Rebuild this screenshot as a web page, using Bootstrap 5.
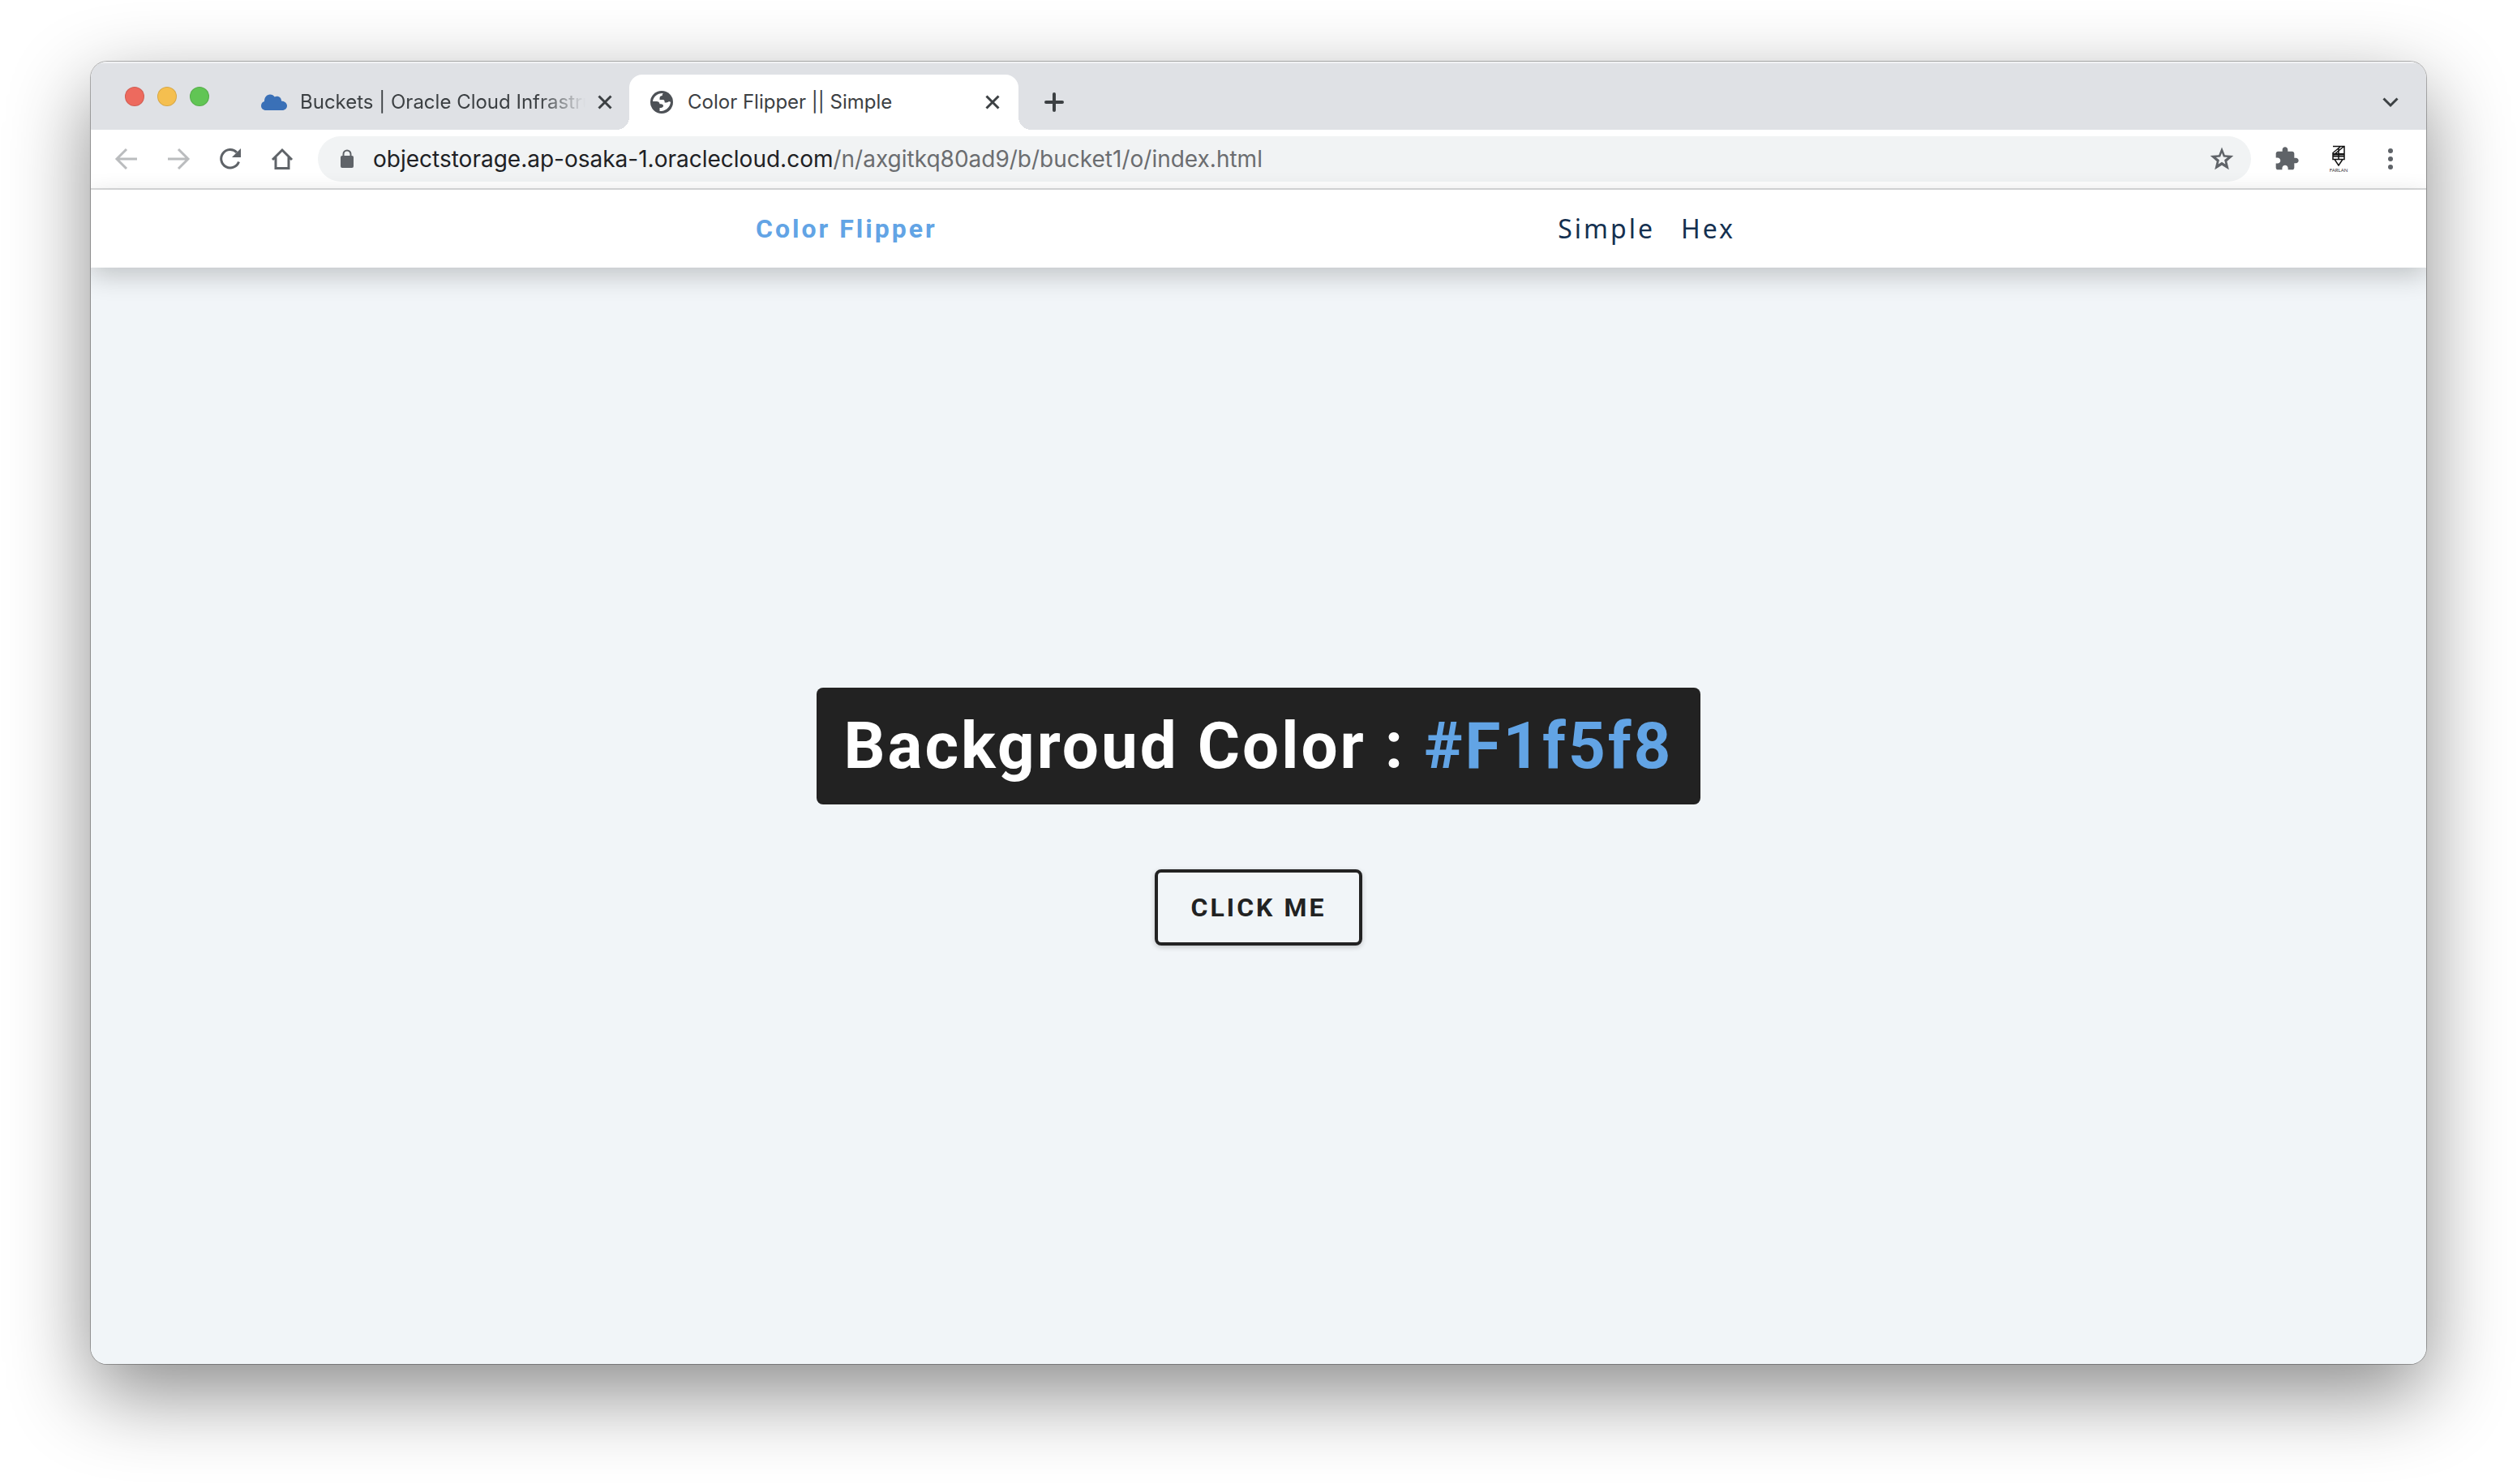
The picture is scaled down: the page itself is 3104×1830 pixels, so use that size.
<!DOCTYPE html>
<html lang="en">
<head>
<meta charset="utf-8">
<meta name="viewport" content="width=device-width, initial-scale=1">
<title>Color Flipper || Simple</title>
<link rel="stylesheet" href="https://cdn.jsdelivr.net/npm/bootstrap@5.3.0/dist/css/bootstrap.min.css">
<style>
  :root { --grey-ink: #5f6368; --tab-ink: #3c4043; --strip: #dfe1e5; --sky: #62a4e5; --coal: #222222; --page: #f1f5f8; }
  body { font-family: Inter, "Liberation Sans", sans-serif; background: #fff; }
  .desktop { padding: 76px 112px 148px; min-height: 100vh; }
  .browser { border-radius: 20px; background: #fff; box-shadow: 0 0 0 1px rgba(0,0,0,.28), 0 36px 100px rgba(0,0,0,.46); }
  .browser-clip { border-radius: 20px; overflow: hidden; }
  .icon-btn { border: 0; background: none; padding: 0; width: 32px; height: 32px; display: flex; align-items: center; justify-content: center; color: var(--grey-ink); }
  svg { display: block; flex: none; }

  .tab-strip { height: 84px; background: var(--strip); box-shadow: inset 0 2px 1px rgba(255,255,255,.6); color: var(--tab-ink); padding: 16px 28px 0 42px; }
  .lights { gap: 16px; padding-top: 15px; width: 154px; }
  .light { width: 24px; height: 24px; border-radius: 50%; border: 1px solid rgba(0,0,0,.12); padding: 0; }
  .light-red { background: #ed6a5e; } .light-amber { background: #f5bf4f; } .light-green { background: #61c554; }
  .tab-item { height: 68px; }
  .tab-item a { font-size: 24px; line-height: 32px; color: var(--tab-ink); white-space: nowrap; }
  .tab-idle { width: 468px; padding: 0 14px; gap: 16px; }
  .tab-idle a { overflow: hidden; flex: 1; margin-right: -8px; -webkit-mask-image: linear-gradient(to right, #000 84%, transparent); mask-image: linear-gradient(to right, #000 84%, transparent); }
  .tab-live { width: 480px; background: #fff; border-radius: 16px 16px 0 0; padding: 0 16px 0 24px; gap: 16px; position: relative; }
  .tab-live::before, .tab-live::after { content: ""; position: absolute; bottom: 0; width: 16px; height: 16px; }
  .tab-live::before { right: 100%; background: radial-gradient(circle at 0 0, transparent 16px, #fff 16px); }
  .tab-live::after { left: 100%; background: radial-gradient(circle at 100% 0, transparent 16px, #fff 16px); }
  .tab-live a { flex: 1; }
  .tab-add { margin-left: 28px; }

  .tool-row { height: 74px; border-bottom: 2px solid #dadbdc; padding: 0 28px; gap: 32px; }
  .omnibox { height: 56px; border-radius: 28px; background: #f1f3f4; padding: 0 20px; gap: 16px; margin: 0 -4px; }
  .address { font-size: 28px; line-height: 40px; color: #6b6d70; white-space: nowrap; flex: 1; }
  .address b { font-weight: 400; color: #202124; }
  .profile { flex-direction: column; gap: 2px; }
  .profile span { font: 400 6px/6px Lato, sans-serif; color: #333; }

  .site { background: var(--page); height: calc(100vh - 382px); }
  .site-nav { height: 96px; background: #fff; box-shadow: 0 10px 30px rgba(0,0,0,.2); position: relative; }
  .nav-center { width: 100%; max-width: 1240px; }
  .brand { font: 700 32px/40px Roboto, sans-serif; letter-spacing: 3px; color: var(--sky); }
  .menu { gap: 32px; padding-right: 32px; }
  .menu a { font: 400 32px/48px "Noto Sans", sans-serif; letter-spacing: 3px; color: #143050; }
  .stage { gap: 80px; padding-top: 2px; }
  .headline { font: 700 80px/80px Roboto, sans-serif; letter-spacing: 3px; background: var(--coal); color: #fff; padding: 32px 34px; border-radius: 8px; margin: 0; }
  .headline span { color: var(--sky); }
  .flip-btn { font: 700 32px/38px Roboto, sans-serif; letter-spacing: 3px; color: var(--coal); background: transparent; border: 4px solid var(--coal); border-radius: 8px; padding: 24px 40px; min-width: 256px; box-shadow: 0 2px 6px rgba(0,0,0,.2); }
</style>
<script src="https://cdn.jsdelivr.net/npm/bootstrap@5.3.0/dist/js/bootstrap.bundle.min.js"></script>
</head>
<body>
<div class="desktop">
  <div class="browser">
    <div class="browser-clip">
      <header class="tab-strip d-flex">
        <div class="lights d-flex align-items-start">
          <button class="light light-red" aria-label="Close window"></button>
          <button class="light light-amber" aria-label="Minimise window"></button>
          <button class="light light-green" aria-label="Zoom window"></button>
        </div>
        <div class="tab-item tab-idle d-flex align-items-center">
          <svg width="32" height="32" viewBox="0 0 32 32" aria-hidden="true"><path fill="#3a70b7" d="M6 26C2.500 26 0 23.500 0 20.500 0 17.500 1.800 15.500 4 15 4 10 7 6.500 11 6.500c2.500 0 4.500 1.200 5.700 3 1-.7 2.300-1 3.500-.8 3 .4 5 3 4.800 5.800 4 .2 7 2.800 7 6 0 3-2.500 5.500-6 5.500z"/></svg>
          <a class="text-decoration-none" href="#">Buckets | Oracle Cloud Infrastructure</a>
          <button class="icon-btn" aria-label="Close tab"><svg width="20" height="20" viewBox="0 0 20 20" fill="none" stroke="#3c4043" stroke-width="3"><path d="M2.500 2.500l15 15M17.500 2.500l-15 15"/></svg></button>
        </div>
        <div class="tab-item tab-live d-flex align-items-center">
          <svg width="32" height="32" viewBox="0 0 32 32" aria-hidden="true"><circle cx="16" cy="16" r="14" fill="#4d5156"/><path fill="#fff" d="M18 5c-1 .6-1.500 1.500-1.200 3-2 0-3.300 1-3.300 3.200v1.800h4c2 0 2.200 1.600 2.200 3.500 2 .2 3.600-.2 4.500-.9 1-.6 2.300-.6 2.800.4-.5 5-4.500 10-11 11h-2.500v-4c2.500 0 4.500-.6 4.500-2.500 0-2-1.800-2.300-4.500-2.300-.2-2.200-1.500-3.200-4-3.200H5C5.500 9.500 11 4.500 18 5z"/></svg>
          <a class="text-decoration-none" href="#">Color Flipper || Simple</a>
          <button class="icon-btn" aria-label="Close tab"><svg width="20" height="20" viewBox="0 0 20 20" fill="none" stroke="#3c4043" stroke-width="3"><path d="M2.500 2.500l15 15M17.500 2.500l-15 15"/></svg></button>
        </div>
        <div class="tab-item tab-add d-flex align-items-center">
          <button class="icon-btn" aria-label="New tab"><svg width="24" height="24" viewBox="0 0 24 24" fill="none" stroke="#3c4043" stroke-width="4" stroke-linecap="round"><path d="M12 2v20M2 12h20"/></svg></button>
        </div>
        <div class="tab-item d-flex align-items-center ms-auto">
          <button class="icon-btn" aria-label="Search tabs"><svg width="20" height="14" viewBox="0 0 20 14" fill="none" stroke="#3c4043" stroke-width="3"><path d="M1.500 2.500L10 11l8.500-8.500"/></svg></button>
        </div>
      </header>

      <div class="tool-row d-flex align-items-center">
        <button class="icon-btn" aria-label="Back"><svg width="32" height="32" viewBox="0 0 32 32" fill="none" stroke="#babcbe" stroke-width="3"><path d="M29 16H4M16 4L4 16l12 12"/></svg></button>
        <button class="icon-btn" aria-label="Forward"><svg width="32" height="32" viewBox="0 0 32 32" fill="none" stroke="#babcbe" stroke-width="3"><path d="M3 16h25M16 4l12 12-12 12"/></svg></button>
        <button class="icon-btn" aria-label="Reload"><svg width="32" height="32" viewBox="0 0 32 32"><path fill="none" stroke="#5f6368" stroke-width="3" d="M26.500 19.500A11.200 11.200 0 1 1 24 8"/><path fill="#5f6368" d="M29 3v11H18z"/></svg></button>
        <button class="icon-btn" aria-label="Home"><svg width="32" height="32" viewBox="0 0 32 32" fill="none" stroke="#5f6368" stroke-width="3"><path d="M4 17L16 5l12 12M8 14v13.500h16V14"/></svg></button>
        <div class="omnibox d-flex align-items-center flex-fill">
          <svg width="32" height="32" viewBox="0 0 32 32" aria-hidden="true"><rect x="8" y="12" width="16" height="15" rx="2" fill="#5f6368"/><path d="M11.500 13v-3a4.500 4.500 0 0 1 9 0v3" fill="none" stroke="#5f6368" stroke-width="2"/></svg>
          <div class="address"><b>objectstorage.ap-osaka-1.oraclecloud.com</b>/n/axgitkq80ad9/b/bucket1/o/index.html</div>
          <button class="icon-btn" aria-label="Bookmark"><svg width="32" height="32" viewBox="0 0 32 32"><path fill="#5f6368" fill-rule="evenodd" d="M16 1.500l3.800 9.700 10.500.9-8 6.800 2.500 10.400L16 23.800l-8.800 5.500 2.500-10.400-8-6.800 10.500-.9zM16 8.500l-1.900 5-5.300.4 4.100 3.400-1.300 5.200 4.400-2.800 4.400 2.800-1.300-5.200 4.100-3.400-5.300-.4z"/></svg></button>
        </div>
        <button class="icon-btn" aria-label="Extensions"><svg width="32" height="32" viewBox="0 0 24 24" fill="#5f6368"><path d="M20.500 11H19V7c0-1.100-.9-2-2-2h-4V3.500C13 2.120 11.880 1 10.500 1S8 2.120 8 3.500V5H4c-1.100 0-1.990.9-1.990 2v3.800H3.500c1.490 0 2.700 1.210 2.700 2.700s-1.210 2.700-2.700 2.700H2V20c0 1.100.9 2 2 2h3.800v-1.500c0-1.490 1.210-2.700 2.700-2.700 1.490 0 2.700 1.210 2.700 2.700V22H17c1.100 0 2-.9 2-2v-4h1.500c1.380 0 2.500-1.120 2.500-2.500S21.880 11 20.500 11z"/></svg></button>
        <button class="icon-btn profile"><svg width="16" height="26" viewBox="0 0 16 26" fill="none" stroke="#111" stroke-width="1.500" aria-hidden="true"><path d="M1 1.500h14v16H1v-8L10 2M2 12L14 2M8 3v14M3 17.500l5 7.500 5-7.500"/><path d="M1 11h14M1 13.500h14" stroke-width="2"/></svg><span>FARLAN</span></button>
        <button class="icon-btn" aria-label="Menu"><svg width="32" height="32" viewBox="0 0 32 32" fill="#5f6368"><circle cx="16" cy="6" r="3"/><circle cx="16" cy="16" r="3"/><circle cx="16" cy="26" r="3"/></svg></button>
      </div>

      <div class="site d-flex flex-column">
        <nav class="site-nav d-flex align-items-center justify-content-center">
          <div class="nav-center d-flex align-items-center justify-content-between">
            <a class="brand text-decoration-none" href="#">Color Flipper</a>
            <ul class="menu list-unstyled d-flex mb-0">
              <li><a class="text-decoration-none" href="#">Simple</a></li>
              <li><a class="text-decoration-none" href="#">Hex</a></li>
            </ul>
          </div>
        </nav>
        <main class="stage flex-fill d-flex flex-column align-items-center justify-content-center">
          <h2 class="headline">Backgroud Color : <span>#F1f5f8</span></h2>
          <button class="flip-btn">CLICK ME</button>
        </main>
      </div>
    </div>
  </div>
</div>
</body>
</html>
